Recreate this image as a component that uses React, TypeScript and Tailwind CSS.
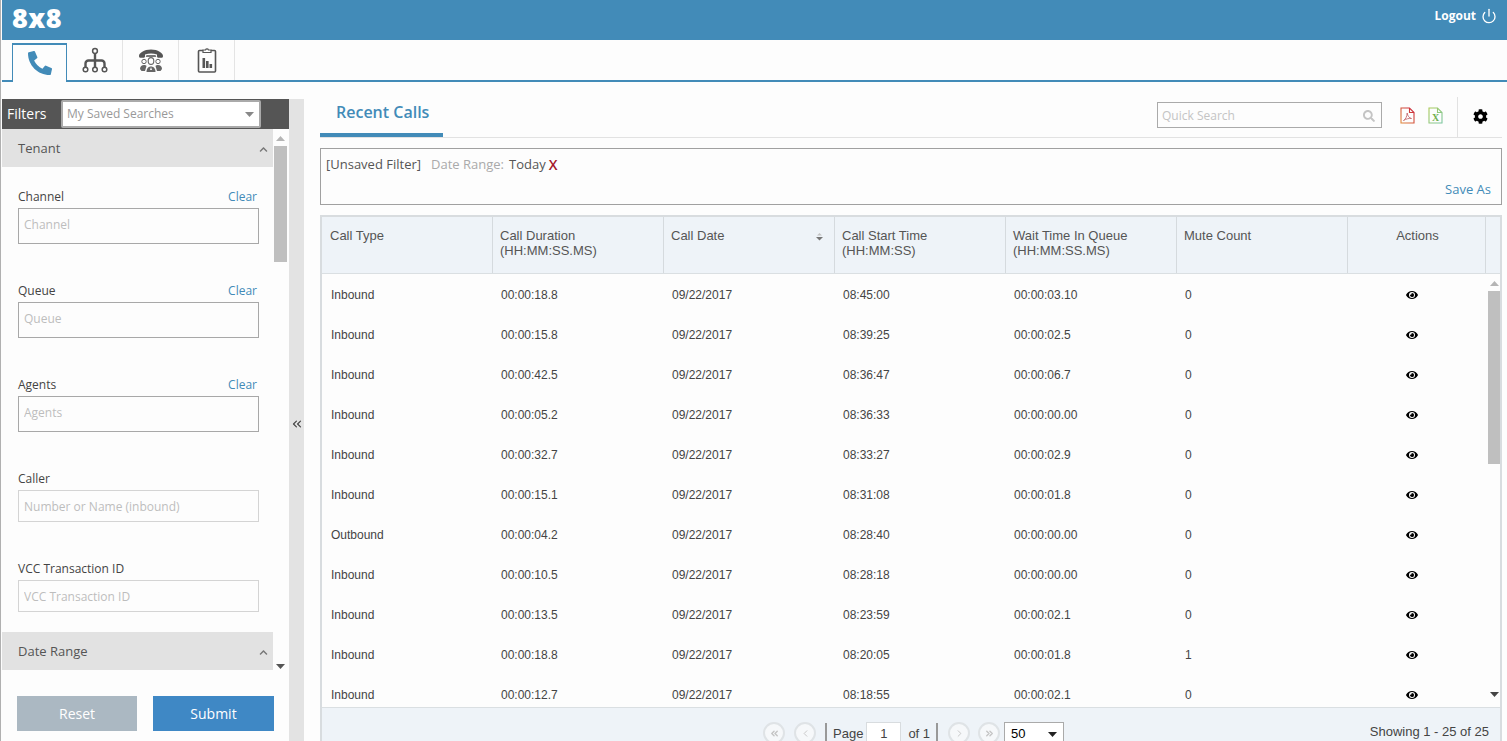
import React from "react";
import { FaEye, FaCog, FaPhoneAlt, FaSearch, FaChevronUp } from "react-icons/fa";
import { Power, ChevronsLeft, ChevronLeft, ChevronRight } from "lucide-react";

const rows = [
  ["Inbound", "00:00:18.8", "09/22/2017", "08:45:00", "00:00:03.10", "0"],
  ["Inbound", "00:00:15.8", "09/22/2017", "08:39:25", "00:00:02.5", "0"],
  ["Inbound", "00:00:42.5", "09/22/2017", "08:36:47", "00:00:06.7", "0"],
  ["Inbound", "00:00:05.2", "09/22/2017", "08:36:33", "00:00:00.00", "0"],
  ["Inbound", "00:00:32.7", "09/22/2017", "08:33:27", "00:00:02.9", "0"],
  ["Inbound", "00:00:15.1", "09/22/2017", "08:31:08", "00:00:01.8", "0"],
  ["Outbound", "00:00:04.2", "09/22/2017", "08:28:40", "00:00:00.00", "0"],
  ["Inbound", "00:00:10.5", "09/22/2017", "08:28:18", "00:00:00.00", "0"],
  ["Inbound", "00:00:13.5", "09/22/2017", "08:23:59", "00:00:02.1", "0"],
  ["Inbound", "00:00:18.8", "09/22/2017", "08:20:05", "00:00:01.8", "1"],
  ["Inbound", "00:00:12.7", "09/22/2017", "08:18:55", "00:00:02.1", "0"],
];

const gridHead = "grid grid-cols-[171px_171px_171px_171px_171px_171px_138px]";
const gridBody = "grid grid-cols-[171px_171px_171px_171px_171px_171px_127px]";

function OrgIcon() {
  return (
    <svg width="26" height="26" viewBox="0 0 26 26" fill="none" stroke="#555" strokeWidth="1.5">
      <circle cx="13" cy="4" r="2.4" />
      <path d="M13 6.500V20" strokeWidth="2.400" />
      <path d="M3.500 20v-3.500a3 3 0 0 1 3-3h13a3 3 0 0 1 3 3V20" strokeWidth="2.400" />
      <circle cx="3.500" cy="22.500" r="2.300" />
      <circle cx="13" cy="22.500" r="2.300" />
      <circle cx="22.500" cy="22.500" r="2.300" />
    </svg>
  );
}

function AgentsIcon() {
  return (
    <svg width="26" height="26" viewBox="0 0 26 26">
      <path d="M1 9c0-3 5-6.500 12-6.500S25 6 25 9c0 1-.5 1.800-1.500 1.800h-3c-1 0-1.500-.8-1.500-1.800V7.500C17 6.800 15 6.500 13 6.500S9 6.800 7 7.500V9c0 1-.5 1.800-1.500 1.800h-3C1.500 10.800 1 10 1 9z" fill="#555" />
      <path d="M8.500 8h9l.8 2H7.700z" fill="#777" />
      <g fill="#fff" stroke="#666" strokeWidth="1">
        <circle cx="6" cy="14.500" r="2.200" />
        <circle cx="20" cy="14.500" r="2.200" />
      </g>
      <path d="M2 22c0-2.500 1.800-4 4-4 1.200 0 2 .4 2.500 1L7 24H3.500z" fill="#666" />
      <path d="M24 22c0-2.500-1.800-4-4-4-1.200 0-2 .4-2.500 1l1.500 5h3.500z" fill="#666" />
      <ellipse cx="13" cy="14" rx="2.800" ry="3.400" fill="#fff" stroke="#666" strokeWidth="1.100" />
      <path d="M8.500 25c0-3.300 1.800-5.500 4.500-5.500s4.500 2.200 4.500 5.500z" fill="#666" />
      <path d="M13 20l-1 3h2z" fill="#fff" />
    </svg>
  );
}

function ClipIcon() {
  return (
    <svg width="20" height="26" viewBox="0 0 20 26" fill="none">
      <path d="M6 3.500H2.500a1 1 0 0 0-1 1V24a1 1 0 0 0 1 1h15a1 1 0 0 0 1-1V4.500a1 1 0 0 0-1-1H14" stroke="#555" strokeWidth="1.600" />
      <path d="M6 5.500V3h2.500a1.600 1.600 0 0 1 3 0H14v2.500z" fill="#fff" stroke="#555" strokeWidth="1.200" />
      <rect x="5.500" y="11" width="2.600" height="10" fill="#555" />
      <rect x="9" y="14" width="2.600" height="7" fill="#555" />
      <rect x="12.500" y="17" width="2.600" height="4" fill="#555" />
    </svg>
  );
}

function PdfIcon() {
  return (
    <svg width="15" height="17" viewBox="0 0 15 17" fill="none">
      <defs>
        <linearGradient id="pdfg" x1="0" y1="1" x2="1" y2="0">
          <stop offset="0" stopColor="#e08a3c" />
          <stop offset="1" stopColor="#c8203c" />
        </linearGradient>
      </defs>
      <path d="M1 1h8.500L14 5.500V16H1z M9.500 1v4.500H14" stroke="url(#pdfg)" strokeWidth="1.100" />
      <path d="M3.500 13.500c2-1 3.500-4 3.700-7.500.4 3 2 5 4.300 5.500-2.500-.3-5.500.3-8 2z" stroke="#c56a70" strokeWidth="0.900" />
    </svg>
  );
}

function XlsIcon() {
  return (
    <svg width="15" height="17" viewBox="0 0 15 17" fill="none">
      <defs>
        <linearGradient id="xlsg" x1="0" y1="0" x2="1" y2="1">
          <stop offset="0" stopColor="#a9c957" />
          <stop offset="1" stopColor="#7cc6a0" />
        </linearGradient>
      </defs>
      <path d="M1 1h8.500L14 5.500V16H1z M9.500 1v4.500H14" stroke="url(#xlsg)" strokeWidth="1.100" />
      <text x="7.500" y="14" textAnchor="middle" fontFamily="Liberation Serif, serif" fontWeight="700" fontSize="10" fill="#6fb04f">X</text>
    </svg>
  );
}

function Field({ label, clear, dark, h }: { label: string; clear?: boolean; dark?: boolean; h: string }) {
  return (
    <div className="w-[241px]">
      <div className="flex h-[21px] items-center justify-between pb-[2px] pr-[2px] text-[12px] text-[#444]">
        <span>{label}</span>
        {clear && <span className="text-[#428bb8]">Clear</span>}
      </div>
      <input
        readOnly
        placeholder={label === "Caller" ? "Number or Name (inbound)" : label}
        className={`block w-full border bg-[#fdfdfd] px-[5px] text-[12px] outline-none placeholder:text-[#bdbdbd] ${h} ${dark ? "border-[#a8a8a8] pb-[3px]" : "border-[#d4d4d4]"}`}
      />
    </div>
  );
}

function Accordion({ title }: { title: string }) {
  return (
    <div className="flex h-[38px] w-[271px] items-center justify-between bg-[#e2e2e2] pl-[16px] pr-[5px] pt-[2px] text-[13px] text-[#555]">
      <span>{title}</span>
      <FaChevronUp className="text-[#777]" size={9} />
    </div>
  );
}

function CircleBtn({ children }: { children: React.ReactNode }) {
  return (
    <div className="flex h-[22px] w-[22px] items-center justify-center rounded-full border-2 border-[#dfe3e6] bg-[#f6f8fa] text-[#c4c4c4]">
      {children}
    </div>
  );
}

const Triangle = ({ up, color }: { up?: boolean; color: string }) => (
  <svg width="9" height="5" viewBox="0 0 9 5">
    <path d={up ? "M4.500 0L9 5H0z" : "M0 0h9L4.500 5z"} fill={color} />
  </svg>
);

export default function App() {
  return (
    <div className="flex h-[741px] w-[1507px] flex-col overflow-hidden border-l border-[#b0b0b0] bg-[#fdfdfd] pl-px font-['Open_Sans',sans-serif]">
      <header className="flex h-[40px] shrink-0 items-start justify-between bg-[#428bb8] pl-[10px] pr-[10px] text-white">
        <span className="mt-[2px] text-[27px] font-extrabold leading-[32px] tracking-[0.4px]">8x8</span>
        <div className="mt-[7px] flex items-center gap-[5px]">
          <span className="text-[12px] font-bold">Logout</span>
          <Power size={16} strokeWidth={2} />
        </div>
      </header>

      <nav className="flex h-[42px] shrink-0 border-b-2 border-[#428bb8] pl-[10px]">
        <div className="mt-[3px] flex h-[39px] w-[55px] items-start justify-center border-x border-t-2 border-[#428bb8] bg-[#fdfdfd] pt-[6px]">
          <FaPhoneAlt size={24} color="#428bb8" />
        </div>
        <div className="flex w-[56px] items-center justify-center border-r border-[#e4e4e4]"><OrgIcon /></div>
        <div className="flex w-[56px] items-center justify-center border-r border-[#e4e4e4] pb-[1px]"><AgentsIcon /></div>
        <div className="flex w-[56px] items-center justify-center border-r border-[#e4e4e4] pb-[1px]"><ClipIcon /></div>
      </nav>

      <div className="flex min-h-0 flex-1 pt-[17px]">
        <aside className="flex w-[287px] shrink-0 flex-col">
          <div className="flex h-[30px] shrink-0 items-center bg-[#555555] pl-[5px] text-[14px] text-white">
            <span className="w-[54px] pb-[2px]">Filters</span>
            <div className="flex h-[28px] w-[200px] items-center justify-between rounded-[2px] border-2 border-[#aaaaaa] bg-white pl-[4px] pr-[5px] text-[12px] text-[#999]">
              <span>My Saved Searches</span>
              <Triangle color="#888" />
            </div>
          </div>
          <div className="flex h-[547px] shrink-0 overflow-hidden">
            <div className="w-[271px] shrink-0">
              <Accordion title="Tenant" />
              <div className="flex flex-col gap-[37px] pl-[16px] pt-[20px]">
                <Field label="Channel" clear dark h="h-[36px]" />
                <Field label="Queue" clear dark h="h-[36px]" />
                <Field label="Agents" clear dark h="h-[36px]" />
                <Field label="Caller" h="h-[32px]" />
                <Field label="VCC Transaction ID" h="h-[32px]" />
              </div>
              <div className="mt-[20px]">
                <Accordion title="Date Range" />
              </div>
            </div>
            <div className="flex w-[16px] shrink-0 flex-col items-center pr-[1px] pt-[7px]">
              <Triangle up color="#b5b5b5" />
              <div className="mt-[5px] h-[116px] w-[13px] shrink-0 bg-[#bfbfbf]" />
              <div className="mt-[402px]"><Triangle color="#555" /></div>
            </div>
          </div>
          <div className="flex gap-[16px] pl-[15px] pt-[20px] text-[14px] text-white">
            <div className="flex h-[35px] w-[120px] items-center justify-center bg-[#abb8c2]">Reset</div>
            <div className="flex h-[35px] w-[121px] items-center justify-center bg-[#3f88c5]">Submit</div>
          </div>
        </aside>

        <div className="flex w-[15px] shrink-0 items-start justify-center bg-[#e3e3e3] pt-[318px] text-[#444]">
          <ChevronsLeft size={14} strokeWidth={2} />
        </div>

        <main className="ml-[16px] flex w-[1182px] shrink-0 flex-col">
          <div className="flex h-[39px] shrink-0 items-stretch border-b border-[#e2e2e2]">
            <div className="flex w-[123px] items-start border-b-4 border-[#428bb8] pl-[16px] pt-[1px] text-[16px] font-semibold leading-[24px] text-[#428bb8]">
              Recent Calls
            </div>
            <div className="ml-auto mt-[3px] flex h-[26px] w-[225px] items-center justify-between border border-[#aaaaaa] pl-[4px] pr-[6px] pt-[1px] text-[12px] text-[#c4c4c4]">
              <span>Quick Search</span>
              <FaSearch size={12} color="#c4c4c4" />
            </div>
            <div className="ml-[18px] mt-[8px]"><PdfIcon /></div>
            <div className="ml-[13px] mt-[8px]"><XlsIcon /></div>
            <div className="ml-[14px] flex w-[45px] -mt-[2px] items-start justify-center border-l border-[#e2e2e2] pt-[12px] text-black">
              <FaCog size={15} />
            </div>
          </div>

          <div className="mt-[10px] flex h-[57px] shrink-0 flex-col border border-[#a0a0a0] px-[5px] text-[13px]">
            <div className="mt-[5px] flex items-center text-[#555]">
              <span>[Unsaved Filter]</span>
              <span className="ml-[10px] text-[#aaa]">Date Range:</span>
              <span className="ml-[5px]">Today</span>
              <span className="ml-[3px] text-[14px] font-semibold text-[#a5182b]">X</span>
            </div>
            <div className="mt-[5px] self-end pr-[5px] text-[#428bb8]">Save As</div>
          </div>

          <div className="mt-[10px] flex min-h-[526px] flex-col border-x-2 border-t-2 border-[#d8dcdf] font-['Liberation_Sans',sans-serif]">
            <div className={`${gridHead} h-[57px] shrink-0 border-b border-[#dadfe2] bg-[#eef3f8] text-[13px] leading-[15px] text-[#555]`}>
              {["Call Type", "Call Duration\n(HH:MM:SS.MS)", "Call Date", "Call Start Time\n(HH:MM:SS)", "Wait Time In Queue\n(HH:MM:SS.MS)", "Mute Count"].map((t, i) => (
                <div key={i} className={`relative whitespace-pre-line border-r border-[#d5dade] pt-[11px] ${i === 0 ? "pl-[8px]" : "pl-[7px]"}`}>
                  {t}
                  {i === 2 && (
                    <div className="absolute right-[10px] top-[15px] flex flex-col gap-[1px]">
                      <svg width="9" height="9" viewBox="0 0 9 9">
                        <path d="M2 3.500L4.500 1 7 3.500z" fill="#c4c4c4" />
                        <path d="M1 5h7L4.500 8.500z" fill="#777" />
                      </svg>
                    </div>
                  )}
                </div>
              ))}
              <div className="border-r border-[#d5dade] pl-[2px] pt-[11px] text-center">Actions</div>
            </div>

            <div className="flex h-[433px] shrink-0 overflow-hidden">
              <div className="w-[1153px] shrink-0 overflow-hidden pt-[1px]">
                {rows.map((r, i) => (
                  <div key={i} className={`${gridBody} h-[40px] items-center text-[12px] text-[#444]`}>
                    {r.map((c, j) => (
                      <div key={j} className={j === 0 ? "pl-[9px]" : "pl-[8px]"}>{c}</div>
                    ))}
                    <div className="flex justify-center text-black"><FaEye size={12} /></div>
                  </div>
                ))}
              </div>
              <div className="ml-[13px] flex w-[13px] flex-col items-center pt-[7px]">
                <Triangle up color="#b5b5b5" />
                <div className="mt-[5px] h-[173px] w-[13px] shrink-0 bg-[#bfbfbf]" />
                <div className="mt-[228px]"><Triangle color="#444" /></div>
              </div>
            </div>

            <div className="flex h-[40px] shrink-0 items-start border-t border-[#dadfe2] bg-[#eef3f8] pl-[441px] pt-[14px] text-[13px] text-[#444]">
              <CircleBtn><ChevronsLeft size={11} strokeWidth={3} /></CircleBtn>
              <div className="ml-[9px]"><CircleBtn><ChevronLeft size={11} strokeWidth={2} /></CircleBtn></div>
              <div className="ml-[9px] mt-[1px] h-[20px] w-[2px] bg-[#999]" />
              <span className="ml-[6px] mt-[2px]">Page</span>
              <div className="ml-[3px] flex h-[24px] w-[35px] items-center justify-center border border-[#d8dcdf] bg-white">1</div>
              <span className="ml-[7px] mt-[2px]">of 1</span>
              <div className="ml-[6px] mt-[1px] h-[20px] w-[2px] bg-[#999]" />
              <div className="ml-[10px]"><CircleBtn><ChevronRight size={11} strokeWidth={2} /></CircleBtn></div>
              <div className="ml-[8px]"><CircleBtn><ChevronsLeft className="rotate-180" size={11} strokeWidth={3} /></CircleBtn></div>
              <div className="ml-[4px] flex h-[24px] w-[60px] items-center justify-between border border-[#aaa] bg-white pl-[6px] pr-[6px] text-black">
                <span>50</span>
                <Triangle color="#222" />
              </div>
              <span className="ml-auto mr-[11px]">Showing 1 - 25 of 25</span>
            </div>
          </div>
        </main>
      </div>
    </div>
  );
}
